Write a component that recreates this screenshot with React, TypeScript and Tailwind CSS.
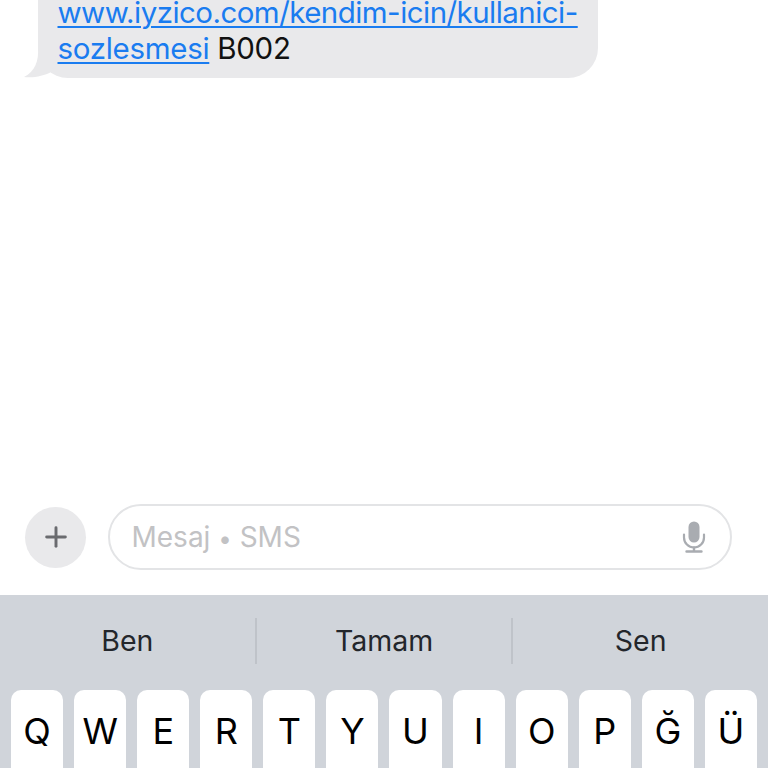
import { Plus } from "lucide-react";

const KEYS = ["Q", "W", "E", "R", "T", "Y", "U", "I", "O", "P", "Ğ", "Ü"];
const SUGGESTIONS = ["Ben", "Tamam", "Sen"];

function MicIcon() {
  return (
    <svg width="24" height="32" viewBox="0 0 24 32" fill="none">
      <rect x="6.5" y="0.5" width="11" height="21" rx="5.5" fill="#a9acb1" />
      <path d="M2 13.5v3a10 10 0 0 0 20 0v-3" stroke="#a9acb1" strokeWidth="2.2" strokeLinecap="round" />
      <path d="M12 26.5v3.5M4.5 30.5h15" stroke="#a9acb1" strokeWidth="2.4" strokeLinecap="round" />
    </svg>
  );
}

export default function App() {
  return (
    <div className="flex h-[768px] w-[768px] flex-col overflow-hidden bg-white font-['Inter','Liberation_Sans',sans-serif]">
      <div className="relative ml-[38px] h-[78px] w-[560px] rounded-b-[30px] bg-[#e9e9eb] pl-[19.5px] pt-[6px] text-[29.5px] leading-[36px] tracking-[-0.3px] whitespace-nowrap text-[#111]">
        <svg className="absolute bottom-0 left-[-14px]" width="34" height="30" viewBox="0 0 34 30">
          <path d="M14 0C15 12 11 24 0 29C10 30 20 28 27 24L34 0Z" fill="#e9e9eb" />
        </svg>
        <div className="relative mt-[-12px]">
          <a className="text-[#1a7cf0] tracking-[-0.55px] underline underline-offset-[3px] decoration-[2px]">www.iyzico.com/kendim-icin/kullanici-</a>
          <br />
          <a className="text-[#1a7cf0] underline underline-offset-[3px] decoration-[2px]">sozlesmesi</a> B002
        </div>
      </div>

      <div className="mt-auto flex items-center pb-[25px] pl-[25px] pr-[36px]">
        <div className="flex h-[61px] w-[61px] items-center justify-center rounded-full bg-[#e9e9eb]">
          <Plus size={32} color="#6a6b6f" strokeWidth={2.2} />
        </div>
        <div className="ml-[22px] flex h-[66px] flex-1 items-center justify-between rounded-full border-2 border-[#e3e4e6] pl-[21.5px] pr-[24px]">
          <span className="text-[28px] text-[#c2c2c4]">
            Mesaj <span className="text-[24px]">•</span> SMS
          </span>
          <MicIcon />
        </div>
      </div>

      <div className="h-[173px] bg-[#d0d4da]">
        <div className="flex h-[92px] items-center">
          {SUGGESTIONS.map((word, i) => (
            <div
              key={word}
              className={
                i < 2
                  ? "flex h-[46px] flex-1 items-center justify-center border-r-2 border-[#bfc3c9] text-[28.5px] text-[#23262b]"
                  : "flex h-[46px] flex-1 items-center justify-center text-[28.5px] text-[#23262b]"
              }
            >
              {word}
            </div>
          ))}
        </div>
        <div className="mt-[3px] flex gap-[11px] px-[11px]">
          {KEYS.map((key) => (
            <div
              key={key}
              className="flex h-[100px] flex-1 justify-center rounded-[10px] bg-white pt-[19px] text-[36px] leading-[44px] text-black"
            >
              {key}
            </div>
          ))}
        </div>
      </div>
    </div>
  );
}
